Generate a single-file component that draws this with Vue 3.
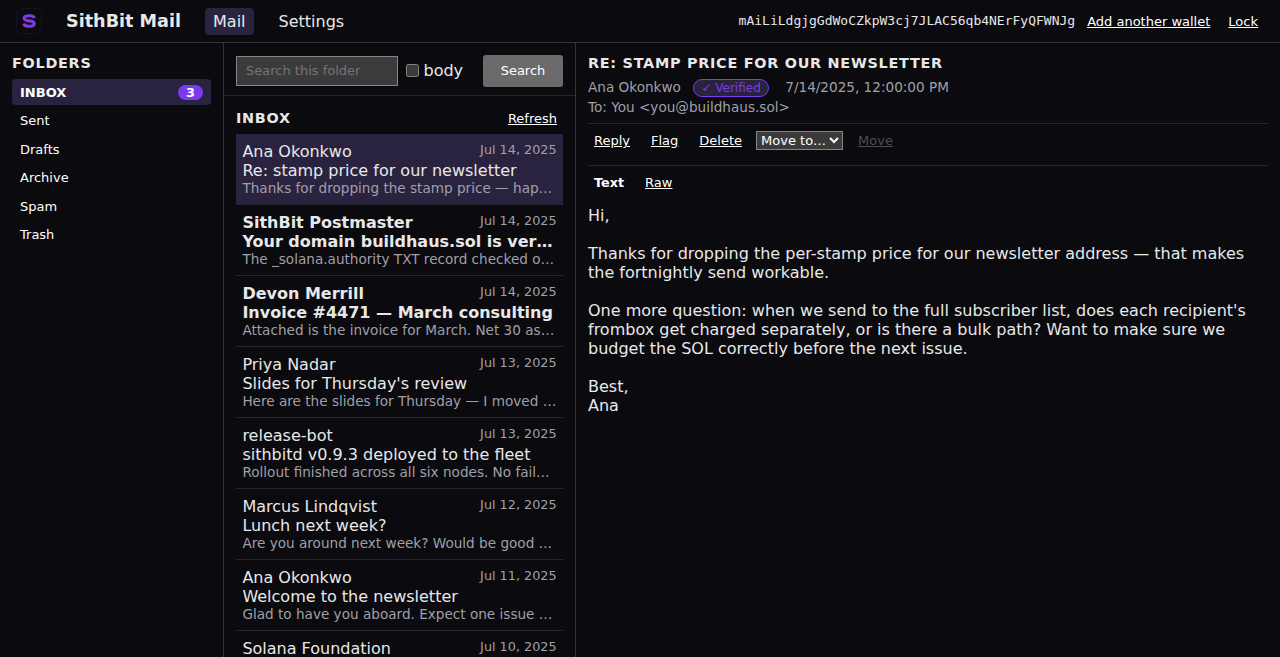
<script setup>
const folders = [
  { name: 'INBOX', count: 3, active: true },
  { name: 'Sent' },
  { name: 'Drafts' },
  { name: 'Archive' },
  { name: 'Spam' },
  { name: 'Trash' },
]

const messages = [
  { from: 'Ana Okonkwo', date: 'Jul 14, 2025', subject: 'Re: stamp price for our newsletter', snippet: 'Thanks for dropping the stamp price — happy to move ahead', selected: true },
  { from: 'SithBit Postmaster', date: 'Jul 14, 2025', subject: 'Your domain buildhaus.sol is verified', snippet: 'The _solana.authority TXT record checked out and is live', unread: true },
  { from: 'Devon Merrill', date: 'Jul 14, 2025', subject: 'Invoice #4471 — March consulting', snippet: 'Attached is the invoice for March. Net 30 as usual, thanks', unread: true },
  { from: 'Priya Nadar', date: 'Jul 13, 2025', subject: "Slides for Thursday's review", snippet: 'Here are the slides for Thursday — I moved the roadmap' },
  { from: 'release-bot', date: 'Jul 13, 2025', subject: 'sithbitd v0.9.3 deployed to the fleet', snippet: 'Rollout finished across all six nodes. No failed checks' },
  { from: 'Marcus Lindqvist', date: 'Jul 12, 2025', subject: 'Lunch next week?', snippet: 'Are you around next week? Would be good to catch up' },
  { from: 'Ana Okonkwo', date: 'Jul 11, 2025', subject: 'Welcome to the newsletter', snippet: 'Glad to have you aboard. Expect one issue every two weeks' },
  { from: 'Solana Foundation', date: 'Jul 10, 2025', subject: 'Grant update', snippet: 'Your application has moved to the next stage of review' },
]

const body = `Hi,

Thanks for dropping the per-stamp price for our newsletter address — that makes the fortnightly send workable.

One more question: when we send to the full subscriber list, does each recipient's frombox get charged separately, or is there a bulk path? Want to make sure we budget the SOL correctly before the next issue.

Best,
Ana`
</script>

<template>
  <div class="app">
    <header class="topbar">
      <svg class="logo" viewBox="0 0 26 26" aria-hidden="true">
        <rect x="0.5" y="0.5" width="25" height="25" rx="6" fill="#0a0a0f" stroke="#15122a" />
        <path d="M18.5 9.8C17.8 8.2 16.2 7.7 13.2 7.7C10.2 7.7 8.2 8.5 8.2 10.2C8.2 12 10 12.5 13.2 12.9C16.4 13.3 18.2 14 18.2 15.7C18.2 17.5 16.2 18.3 13.2 18.3C10.2 18.3 8.4 17.7 7.8 16.2" fill="none" stroke="#7c3aed" stroke-width="3.1" />
        <circle cx="8.2" cy="16.7" r="1.5" fill="#f0225a" />
      </svg>
      <strong class="brand">SithBit Mail</strong>
      <nav class="nav">
        <a class="active">Mail</a>
        <a>Settings</a>
      </nav>
      <div class="account">
        <code>mAiLiLdgjgGdWoCZkpW3cj7JLAC56qb4NErFyQFWNJg</code>
        <button class="link">Add another wallet</button>
        <button class="link">Lock</button>
      </div>
    </header>

    <main class="panes">
      <aside class="folders">
        <h2>Folders</h2>
        <ul>
          <li v-for="f in folders" :key="f.name" :class="{ active: f.active }">
            <span>{{ f.name }}</span>
            <span v-if="f.count" class="badge">{{ f.count }}</span>
          </li>
        </ul>
      </aside>

      <section class="list">
        <form class="search" @submit.prevent>
          <input class="query" type="text" placeholder="Search this folder" />
          <label><input type="checkbox" /><span>body</span></label>
          <button class="submit">Search</button>
        </form>
        <div class="mailbox">
          <div class="list-head">
            <h2>INBOX</h2>
            <button class="link">Refresh</button>
          </div>
          <article v-for="(m, i) in messages" :key="i" class="row" :class="{ selected: m.selected, unread: m.unread }">
            <div class="line">
              <span class="from">{{ m.from }}</span>
              <span class="date">{{ m.date }}</span>
            </div>
            <div class="subject">{{ m.subject }}</div>
            <div class="snippet">{{ m.snippet }}</div>
          </article>
        </div>
      </section>

      <section class="reader">
        <h2>Re: stamp price for our newsletter</h2>
        <div class="meta">
          <span>Ana Okonkwo</span>
          <span class="verified">✓ Verified</span>
          <span>7/14/2025, 12:00:00 PM</span>
        </div>
        <div class="to">To: You &lt;you@buildhaus.sol&gt;</div>
        <div class="actions">
          <button class="link">Reply</button>
          <button class="link">Flag</button>
          <button class="link">Delete</button>
          <select><option>Move to…</option></select>
          <button class="link" disabled>Move</button>
        </div>
        <div class="tabs">
          <button class="link current">Text</button>
          <button class="link">Raw</button>
        </div>
        <div class="body">{{ body }}</div>
      </section>
    </main>
  </div>
</template>

<style>
html {
  color-scheme: dark;
}
body {
  background: #0a0a0f;
  overflow: hidden;
}
</style>

<style scoped>
.app {
  display: flex;
  flex-direction: column;
  height: 100vh;
  overflow: hidden;
  background: #0a0a0f;
  color: #e8e8e8;
  font: 16px "DejaVu Sans", sans-serif;
}
.app * {
  box-sizing: border-box;
}
button,
input,
select {
  font-family: "DejaVu Sans", sans-serif;
  font-size: 13px;
}
h2 {
  margin: 0;
  font-size: 14.4px;
  line-height: 17px;
  letter-spacing: 0.72px;
  text-transform: uppercase;
}
.link {
  border: 0;
  padding: 0;
  background: none;
  color: #fff;
  font-size: 13px;
  line-height: 15px;
  text-decoration: underline;
}
.link:disabled {
  color: #505052;
}

.topbar {
  display: flex;
  flex: none;
  align-items: center;
  height: 43px;
  padding: 0 22px 0 16px;
  border-bottom: 1px solid #333340;
}
.logo {
  width: 26px;
  height: 26px;
  margin-right: 24px;
}
.brand {
  margin-right: 24px;
  font-size: 17.6px;
}
.nav {
  display: flex;
  gap: 17px;
}
.nav a {
  padding: 4px 8px;
  border-radius: 4px;
}
.nav .active {
  background: #2a2340;
}
.account {
  display: flex;
  align-items: center;
  margin-left: auto;
}
.account code {
  margin-top: -1px;
  margin-right: 12px;
  font: 13px "DejaVu Sans Mono", monospace;
  line-height: 15px;
}
.account .link + .link {
  margin-left: 18px;
}

.panes {
  display: grid;
  flex: 1;
  grid-template-columns: 224px 352px 1fr;
  min-height: 0;
}

.folders {
  padding: 12px;
  border-right: 1px solid #333340;
}
.folders ul {
  display: grid;
  gap: 2.5px;
  margin: 7px 0 0;
  padding: 0;
  list-style: none;
}
.folders li {
  display: flex;
  align-items: center;
  justify-content: space-between;
  height: 26px;
  padding: 0 8px;
  border-radius: 4px;
  color: #fff;
  font-size: 13px;
}
.folders .active {
  background: #2a2340;
  font-weight: bold;
}
.badge {
  padding: 0 8px;
  border-radius: 8px;
  background: #7c3aed;
  font-size: 12.8px;
  line-height: 15px;
}

.list {
  display: flex;
  flex-direction: column;
  min-width: 0;
  min-height: 0;
  overflow: hidden;
  border-right: 1px solid #333340;
}
.search {
  display: flex;
  flex: none;
  align-items: center;
  height: 53px;
  padding: 4px 12px 0;
  padding-bottom: 1px;
  border-bottom: 1px solid #26262e;
}
.query {
  width: 162px;
  height: 30px;
  margin-top: 1px;
  padding: 0 9px 1px;
  border: 1px solid #858585;
  border-radius: 0;
}
.search label {
  display: flex;
  align-items: center;
  margin-left: 8px;
}
.search label input {
  width: 13px;
  height: 13px;
  margin: 0 4.5px 0 0;
}
.submit {
  width: 80px;
  height: 32px;
  margin-left: auto;
  padding: 0;
  border: 0;
  border-radius: 3px;
  background: #6b6b6b;
  color: #fff;
  font-size: 13px;
}
.mailbox {
  padding: 11px 12px 0;
}
.list-head {
  display: flex;
  align-items: center;
  justify-content: space-between;
  height: 22px;
  margin-bottom: 5px;
  padding-right: 6px;
}
.row {
  height: 71px;
  padding: 8px 6.4px;
  border-bottom: 1px solid #26262e;
}
.row.selected {
  background: #2a2340;
}
.line {
  display: flex;
  justify-content: space-between;
  height: 19px;
}
.date {
  color: #a0a0a8;
  font-size: 12.8px;
  line-height: 15px;
  font-weight: normal;
}
.unread .from,
.unread .subject {
  font-weight: bold;
}
.subject,
.snippet {
  overflow: hidden;
  text-overflow: ellipsis;
  white-space: nowrap;
}
.snippet {
  color: #a0a0a8;
  font-size: 13.6px;
}

.reader {
  min-width: 0;
  padding: 12px;
}
.meta,
.to {
  color: #a0a0a8;
  font-size: 13.6px;
}
.meta {
  display: flex;
  align-items: flex-start;
  height: 20px;
  margin-top: 7px;
}
.verified {
  height: 18px;
  margin: 0 16px 0 12px;
  padding: 0 7.5px;
  border: 1px solid #7c3aed;
  border-radius: 9px;
  background: #2a2340;
  color: #7c3aed;
  font-size: 12px;
  line-height: 16px;
}
.to {
  height: 16px;
}
.actions {
  display: flex;
  align-items: center;
  height: 43px;
  margin-top: 8px;
  padding: 0 6px 8px;
  border-top: 1px solid #26262e;
  border-bottom: 1px solid #26262e;
}
.actions .link {
  margin-right: 21px;
}
.actions select {
  width: 87px;
  height: 19px;
  margin: 0 15px 0 -7px;
  border: 1px solid #858585;
  border-radius: 0;
  background-color: #3b3b3b;
  color: #fff;
  font-size: 13px;
}
.tabs {
  display: flex;
  gap: 21px;
  padding: 9px 6px 0;
}
.current {
  font-size: 12.8px;
  font-weight: bold;
  text-decoration: none;
}
.body {
  margin-top: 16px;
  line-height: 19px;
  white-space: pre-wrap;
}
</style>
